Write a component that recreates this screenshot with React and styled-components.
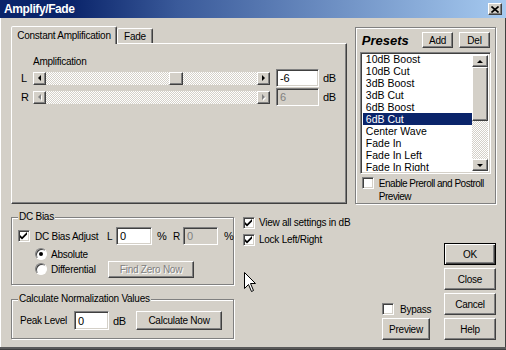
import React from "react";
import styled, { createGlobalStyle, css } from "styled-components";

const face = "#d4d0c8";
const shade = "#808080";
const dark = "#404040";

const GlobalStyle = createGlobalStyle`
  html, body { margin: 0; padding: 0; background: ${face}; }
  body {
    font-family: "Liberation Sans", Arial, sans-serif;
    font-size: 10px;
    letter-spacing: -0.25px;
    color: #000;
  }
`;

const raised = css`
  box-sizing: border-box;
  background: ${face};
  border: 1px solid;
  border-color: #fff ${dark} ${dark} #fff;
  box-shadow: inset -1px -1px 0 ${shade};
`;

const sunken = css`
  box-sizing: border-box;
  border: 1px solid;
  border-color: ${shade} #fff #fff ${shade};
  box-shadow: inset 1px 1px 0 ${dark}, inset -1px -1px 0 ${face};
`;

const checker = css`
  background-color: ${face};
  background-image: repeating-conic-gradient(#fff 0 25%, ${face} 0 50%);
  background-size: 2px 2px;
`;

const Window = styled.div`
  position: relative;
  width: 506px;
  height: 350px;
  box-sizing: border-box;
  background: ${face};
  display: flex;
  flex-direction: column;
  overflow: hidden;
  box-shadow: inset 0 -1px 0 ${dark}, inset 0 -3px 0 #5a5a5a, inset -1px 0 0 ${dark}, inset 1px 0 0 #fff;
`;

const TitleBar = styled.div`
  flex: none;
  height: 18px;
  display: flex;
  align-items: center;
  justify-content: space-between;
  padding: 0 4px;
  background: linear-gradient(to right, #0a246a 0%, #0a246a 14%, #3a5a9a 35%, #a6caf0 100%);
  color: #fff;
  font-size: 12px;
  font-weight: bold;
  letter-spacing: -0.4px;
`;

const CloseButton = styled.div`
  ${raised};
  width: 14px;
  height: 12px;
  display: flex;
  align-items: center;
  justify-content: center;
`;

const Body = styled.div`
  flex: 1;
  display: flex;
  flex-direction: column;
  padding: 8px 10px 0 11px;
`;

const TopRow = styled.div`
  display: flex;
  align-items: flex-start;
`;

const TabArea = styled.div`
  width: 338px;
  display: flex;
  flex-direction: column;
`;

const TabStrip = styled.div`
  height: 17px;
  display: flex;
  align-items: flex-end;
`;

const Tab = styled.div`
  box-sizing: border-box;
  position: relative;
  background: ${face};
  border: 1px solid;
  border-bottom: none;
  border-color: #fff ${dark} transparent #fff;
  border-radius: 2px 2px 0 0;
  box-shadow: inset -1px 0 0 ${shade};
  display: flex;
  align-items: center;
  justify-content: center;
  width: ${(p) => (p.$active ? "106px" : "36px")};
  height: ${(p) => (p.$active ? "18px" : "15px")};
  margin-bottom: ${(p) => (p.$active ? "-1px" : "0")};
  padding-bottom: ${(p) => (p.$active ? "1px" : "0")};
  z-index: ${(p) => (p.$active ? 1 : 0)};
`;

const TabPanel = styled.div`
  ${raised};
  height: 161px;
  padding: 12px 0 0 9px;
  display: flex;
  flex-direction: column;
`;

const PanelLabel = styled.div`
  line-height: 12px;
  margin-left: 12px;
  margin-bottom: 1px;
`;

const SliderLine = styled.div`
  display: flex;
  align-items: center;
  height: 18px;
  margin-bottom: 1px;
`;

const Channel = styled.span`
  width: 12px;
  font-size: 11px;
`;

const ArrowBtn = styled.div`
  ${raised};
  width: 13px;
  height: 13px;
  display: flex;
  align-items: center;
  justify-content: center;
`;

const Tri = styled.span`
  width: 0;
  height: 0;
  border-style: solid;
  border-color: transparent;
  ${(p) =>
    p.$dir === "left" &&
    css`
      border-width: 3px 3px 3px 0;
      border-right-color: ${p.$off ? shade : "#000"};
    `}
  ${(p) =>
    p.$dir === "right" &&
    css`
      border-width: 3px 0 3px 3px;
      border-left-color: ${p.$off ? shade : "#000"};
    `}
  ${(p) =>
    p.$dir === "up" &&
    css`
      border-width: 0 3px 3px 3px;
      border-bottom-color: #000;
    `}
  ${(p) =>
    p.$dir === "down" &&
    css`
      border-width: 3px 3px 0 3px;
      border-top-color: #000;
    `}
  ${(p) => p.$off && css`filter: drop-shadow(1px 1px 0 #fff);`}
`;

const Track = styled.div`
  ${checker};
  position: relative;
  width: 211px;
  height: 13px;
`;

const Thumb = styled.div`
  ${raised};
  position: absolute;
  top: 0;
  width: 14px;
  height: 13px;
`;

const Field = styled.div`
  ${sunken};
  flex: none;
  width: ${(p) => p.$w}px;
  height: ${(p) => p.$h}px;
  margin-left: ${(p) => p.$ml || 0}px;
  padding-left: 3px;
  display: flex;
  align-items: center;
  background: ${(p) => (p.$off ? face : "#fff")};
  color: ${(p) => (p.$off ? shade : "#000")};
  font-size: 11px;
`;

const Unit = styled.span`
  flex: none;
  margin-left: ${(p) => p.$ml ?? 4}px;
  width: ${(p) => (p.$w ? `${p.$w}px` : "auto")};
  font-size: 11px;
`;

const PresetsBox = styled.div`
  box-sizing: border-box;
  width: 142px;
  height: 177px;
  margin: 1px 0 0 8px;
  padding: 4px 4px 0 4px;
  border: 1px solid ${shade};
  box-shadow: inset 1px 1px 0 #fff, 1px 1px 0 #fff;
  display: flex;
  flex-direction: column;
`;

const PresetsHead = styled.div`
  display: flex;
  align-items: center;
  height: 16px;
  padding-left: 2px;
  gap: 6px;
`;

const PresetsTitle = styled.span`
  font-size: 13px;
  font-weight: bold;
  font-style: italic;
  letter-spacing: 0;
  margin-right: auto;
`;

const SmallButton = styled.div`
  ${raised};
  width: 31px;
  height: 16px;
  display: flex;
  align-items: center;
  justify-content: center;
  margin-right: ${(p) => p.$mr || 0}px;
`;

const ListBox = styled.div`
  ${sunken};
  width: 131px;
  height: 122px;
  margin-top: 4px;
  padding: 2px;
  background: #fff;
  display: flex;
`;

const ListItems = styled.div`
  flex: 1;
  overflow: hidden;
`;

const ListInner = styled.div`
  margin-top: -2px;
`;

const ListItem = styled.div`
  height: 12px;
  line-height: 12px;
  padding-left: 3px;
  font-size: 10.5px;
  letter-spacing: 0;
  background: ${(p) => (p.$sel ? "#0a246a" : "transparent")};
  color: ${(p) => (p.$sel ? "#fff" : "#000")};
  white-space: nowrap;
`;

const ScrollBar = styled.div`
  width: 16px;
  display: flex;
  flex-direction: column;
`;

const ScrollBtn = styled.div`
  ${raised};
  height: ${(p) => p.$h}px;
  flex: none;
  display: flex;
  align-items: center;
  justify-content: center;
`;

const ScrollTrack = styled.div`
  ${checker};
  flex: 1;
`;

const CheckRow = styled.div`
  display: flex;
  align-items: ${(p) => (p.$top ? "flex-start" : "center")};
  gap: ${(p) => p.$gap ?? 4}px;
  height: ${(p) => (p.$h ? `${p.$h}px` : "auto")};
  padding-left: ${(p) => p.$pl || 0}px;
  margin-top: ${(p) => p.$mt || 0}px;
`;

const Box = styled.span`
  ${sunken};
  flex: none;
  width: 12px;
  height: 12px;
  background: #fff;
  display: flex;
  align-items: center;
  justify-content: center;
`;

const WrapLabel = styled.span`
  line-height: 13px;
  letter-spacing: -0.5px;
  white-space: nowrap;
`;

const BottomRow = styled.div`
  display: flex;
  align-items: flex-start;
  margin-top: 13px;
`;

const LeftCol = styled.div`
  width: 223px;
  display: flex;
  flex-direction: column;
`;

const Group = styled.div`
  box-sizing: border-box;
  display: flex;
  flex-direction: column;
  border: 1px solid ${shade};
  box-shadow: inset 1px 1px 0 #fff, 1px 1px 0 #fff;
  padding: 0 6px ${(p) => p.$pb}px 6px;
  margin-top: ${(p) => p.$mt || 0}px;
`;

const GroupTitle = styled.span`
  align-self: flex-start;
  margin-top: -7px;
  padding: 0 1px;
  line-height: 12px;
  background: ${face};
`;

const Line = styled.div`
  display: flex;
  align-items: center;
  height: ${(p) => p.$h}px;
  margin-top: ${(p) => p.$mt || 0}px;
  padding-left: ${(p) => p.$pl || 0}px;
`;

const Text = styled.span`
  flex: none;
  width: ${(p) => (p.$w ? `${p.$w}px` : "auto")};
  margin-left: ${(p) => p.$ml || 0}px;
  white-space: nowrap;
`;

const Radio = styled.span`
  flex: none;
  box-sizing: border-box;
  width: 12px;
  height: 12px;
  border-radius: 50%;
  border: 1px solid;
  border-color: ${shade} #fff #fff ${shade};
  box-shadow: inset 1px 1px 0 ${dark};
  background: #fff;
  display: flex;
  align-items: center;
  justify-content: center;
  margin-right: 4px;

  &::after {
    content: "";
    width: 4px;
    height: 4px;
    border-radius: 50%;
    background: ${(p) => (p.$on ? "#000" : "transparent")};
  }
`;

const Button = styled.div`
  ${raised};
  flex: none;
  width: ${(p) => p.$w}px;
  height: ${(p) => p.$h}px;
  display: flex;
  align-items: center;
  justify-content: center;
  ${(p) =>
    p.$off &&
    css`
      color: ${shade};
      text-shadow: 1px 1px 0 #fff;
    `}
  ${(p) =>
    p.$default &&
    css`
      border: 1px solid #000;
      box-shadow: inset 1px 1px 0 #fff, inset -1px -1px 0 ${dark}, inset -2px -2px 0 ${shade};
    `}
`;

const MidCol = styled.div`
  flex: 1;
  margin: -1px 0 0 9px;
  display: flex;
  flex-direction: column;
  gap: 4px;
`;

const PreviewCol = styled.div`
  align-self: flex-end;
  width: 48px;
  display: flex;
  flex-direction: column;
  gap: 3px;
`;

const ButtonCol = styled.div`
  width: 52px;
  margin: 26px 0 0 14px;
  display: flex;
  flex-direction: column;
  gap: 3px;
`;

const CursorMark = styled.svg`
  position: absolute;
  left: 244px;
  top: 272px;
`;

const Check = ({ on }) => (
  <Box>
    {on && (
      <svg width="8" height="8" viewBox="0 0 8 8">
        <polygon points="0,3 2,5 7,0 7,2.5 2,7.5 0,5.5" fill="#000" />
      </svg>
    )}
  </Box>
);

function SliderRow({ channel, value, pos, off }) {
  return (
    <SliderLine>
      <Channel>{channel}</Channel>
      <ArrowBtn>
        <Tri $dir="left" $off={off} />
      </ArrowBtn>
      <Track>{!off && <Thumb style={{ left: `calc(${pos} * (100% - 14px))` }} />}</Track>
      <ArrowBtn>
        <Tri $dir="right" $off={off} />
      </ArrowBtn>
      <Field $w={43} $h={18} $ml={6} $off={off}>
        {value}
      </Field>
      <Unit>dB</Unit>
    </SliderLine>
  );
}

const presets = [
  "10dB Boost",
  "10dB Cut",
  "3dB Boost",
  "3dB Cut",
  "6dB Boost",
  "6dB Cut",
  "Center Wave",
  "Fade In",
  "Fade In Left",
  "Fade In Right",
  "Fade Out",
];

export default function App() {
  return (
    <>
      <GlobalStyle />
      <Window>
        <TitleBar>
          <span>Amplify/Fade</span>
          <CloseButton>
            <svg width="8" height="7" viewBox="0 0 8 7">
              <path d="M0.5 0.5 L7.5 6.5 M7.5 0.5 L0.5 6.5" stroke="#000" strokeWidth="1.6" />
            </svg>
          </CloseButton>
        </TitleBar>
        <Body>
          <TopRow>
            <TabArea>
              <TabStrip>
                <Tab $active>Constant Amplification</Tab>
                <Tab>Fade</Tab>
              </TabStrip>
              <TabPanel>
                <PanelLabel>Amplification</PanelLabel>
                <SliderRow channel="L" value="-6" pos={0.624} />
                <SliderRow channel="R" value="6" off />
              </TabPanel>
            </TabArea>

            <PresetsBox>
              <PresetsHead>
                <PresetsTitle>Presets</PresetsTitle>
                <SmallButton>Add</SmallButton>
                <SmallButton $mr={1}>Del</SmallButton>
              </PresetsHead>
              <ListBox>
                <ListItems>
                  <ListInner>
                    {presets.map((p) => (
                      <ListItem key={p} $sel={p === "6dB Cut"}>
                        {p}
                      </ListItem>
                    ))}
                  </ListInner>
                </ListItems>
                <ScrollBar>
                  <ScrollBtn $h={12}>
                    <Tri $dir="up" />
                  </ScrollBtn>
                  <ScrollBtn $h={54} />
                  <ScrollTrack />
                  <ScrollBtn $h={12}>
                    <Tri $dir="down" />
                  </ScrollBtn>
                </ScrollBar>
              </ListBox>
              <CheckRow $top $gap={5} $pl={2} $mt={3}>
                <Check />
                <WrapLabel>
                  Enable Preroll and Postroll
                  <br />
                  Preview
                </WrapLabel>
              </CheckRow>
            </PresetsBox>
          </TopRow>

          <BottomRow>
            <LeftCol>
              <Group $pb={6}>
                <GroupTitle>DC Bias</GroupTitle>
                <Line $h={18} $mt={4}>
                  <Check on />
                  <Text $w={72} $ml={5}>DC Bias Adjust</Text>
                  <Text $w={9}>L</Text>
                  <Field $w={36} $h={18}>0</Field>
                  <Unit $ml={5} $w={16}>%</Unit>
                  <Text $w={10}>R</Text>
                  <Field $w={35} $h={18} $off>0</Field>
                  <Unit $ml={6}>%</Unit>
                </Line>
                <Line $h={12} $mt={3} $pl={17}>
                  <Radio $on />
                  <Text>Absolute</Text>
                </Line>
                <Line $h={18} $pl={17}>
                  <Radio />
                  <Text $w={57}>Differential</Text>
                  <Button $w={86} $h={17} $off>
                    Find Zero Now
                  </Button>
                </Line>
              </Group>

              <Group $pb={8} $mt={14}>
                <GroupTitle>Calculate Normalization Values</GroupTitle>
                <Line $h={19} $mt={6}>
                  <Text $w={54} $ml={2}>Peak Level</Text>
                  <Field $w={35} $h={19}>0</Field>
                  <Unit $w={23}>dB</Unit>
                  <Button $w={86} $h={19}>Calculate Now</Button>
                </Line>
              </Group>
            </LeftCol>

            <MidCol>
              <CheckRow $h={13}>
                <Check on />
                <Text>View all settings in dB</Text>
              </CheckRow>
              <CheckRow $h={13}>
                <Check on />
                <Text>Lock Left/Right</Text>
              </CheckRow>
            </MidCol>

            <PreviewCol>
              <CheckRow $h={12} $gap={6}>
                <Check />
                <Text>Bypass</Text>
              </CheckRow>
              <Button $w={48} $h={22}>Preview</Button>
            </PreviewCol>

            <ButtonCol>
              <Button $w={52} $h={22} $default>OK</Button>
              <Button $w={52} $h={22}>Close</Button>
              <Button $w={52} $h={22}>Cancel</Button>
              <Button $w={52} $h={22}>Help</Button>
            </ButtonCol>
          </BottomRow>
        </Body>

        <CursorMark width="13" height="21" viewBox="0 0 13 21">
          <path
            d="M0.5 0.5 L0.5 16.5 L4.5 12.5 L7.5 19.5 L9.5 18.5 L6.5 11.5 L11.5 11.5 Z"
            fill="#fff"
            stroke="#000"
            strokeWidth="1"
          />
        </CursorMark>
      </Window>
    </>
  );
}
